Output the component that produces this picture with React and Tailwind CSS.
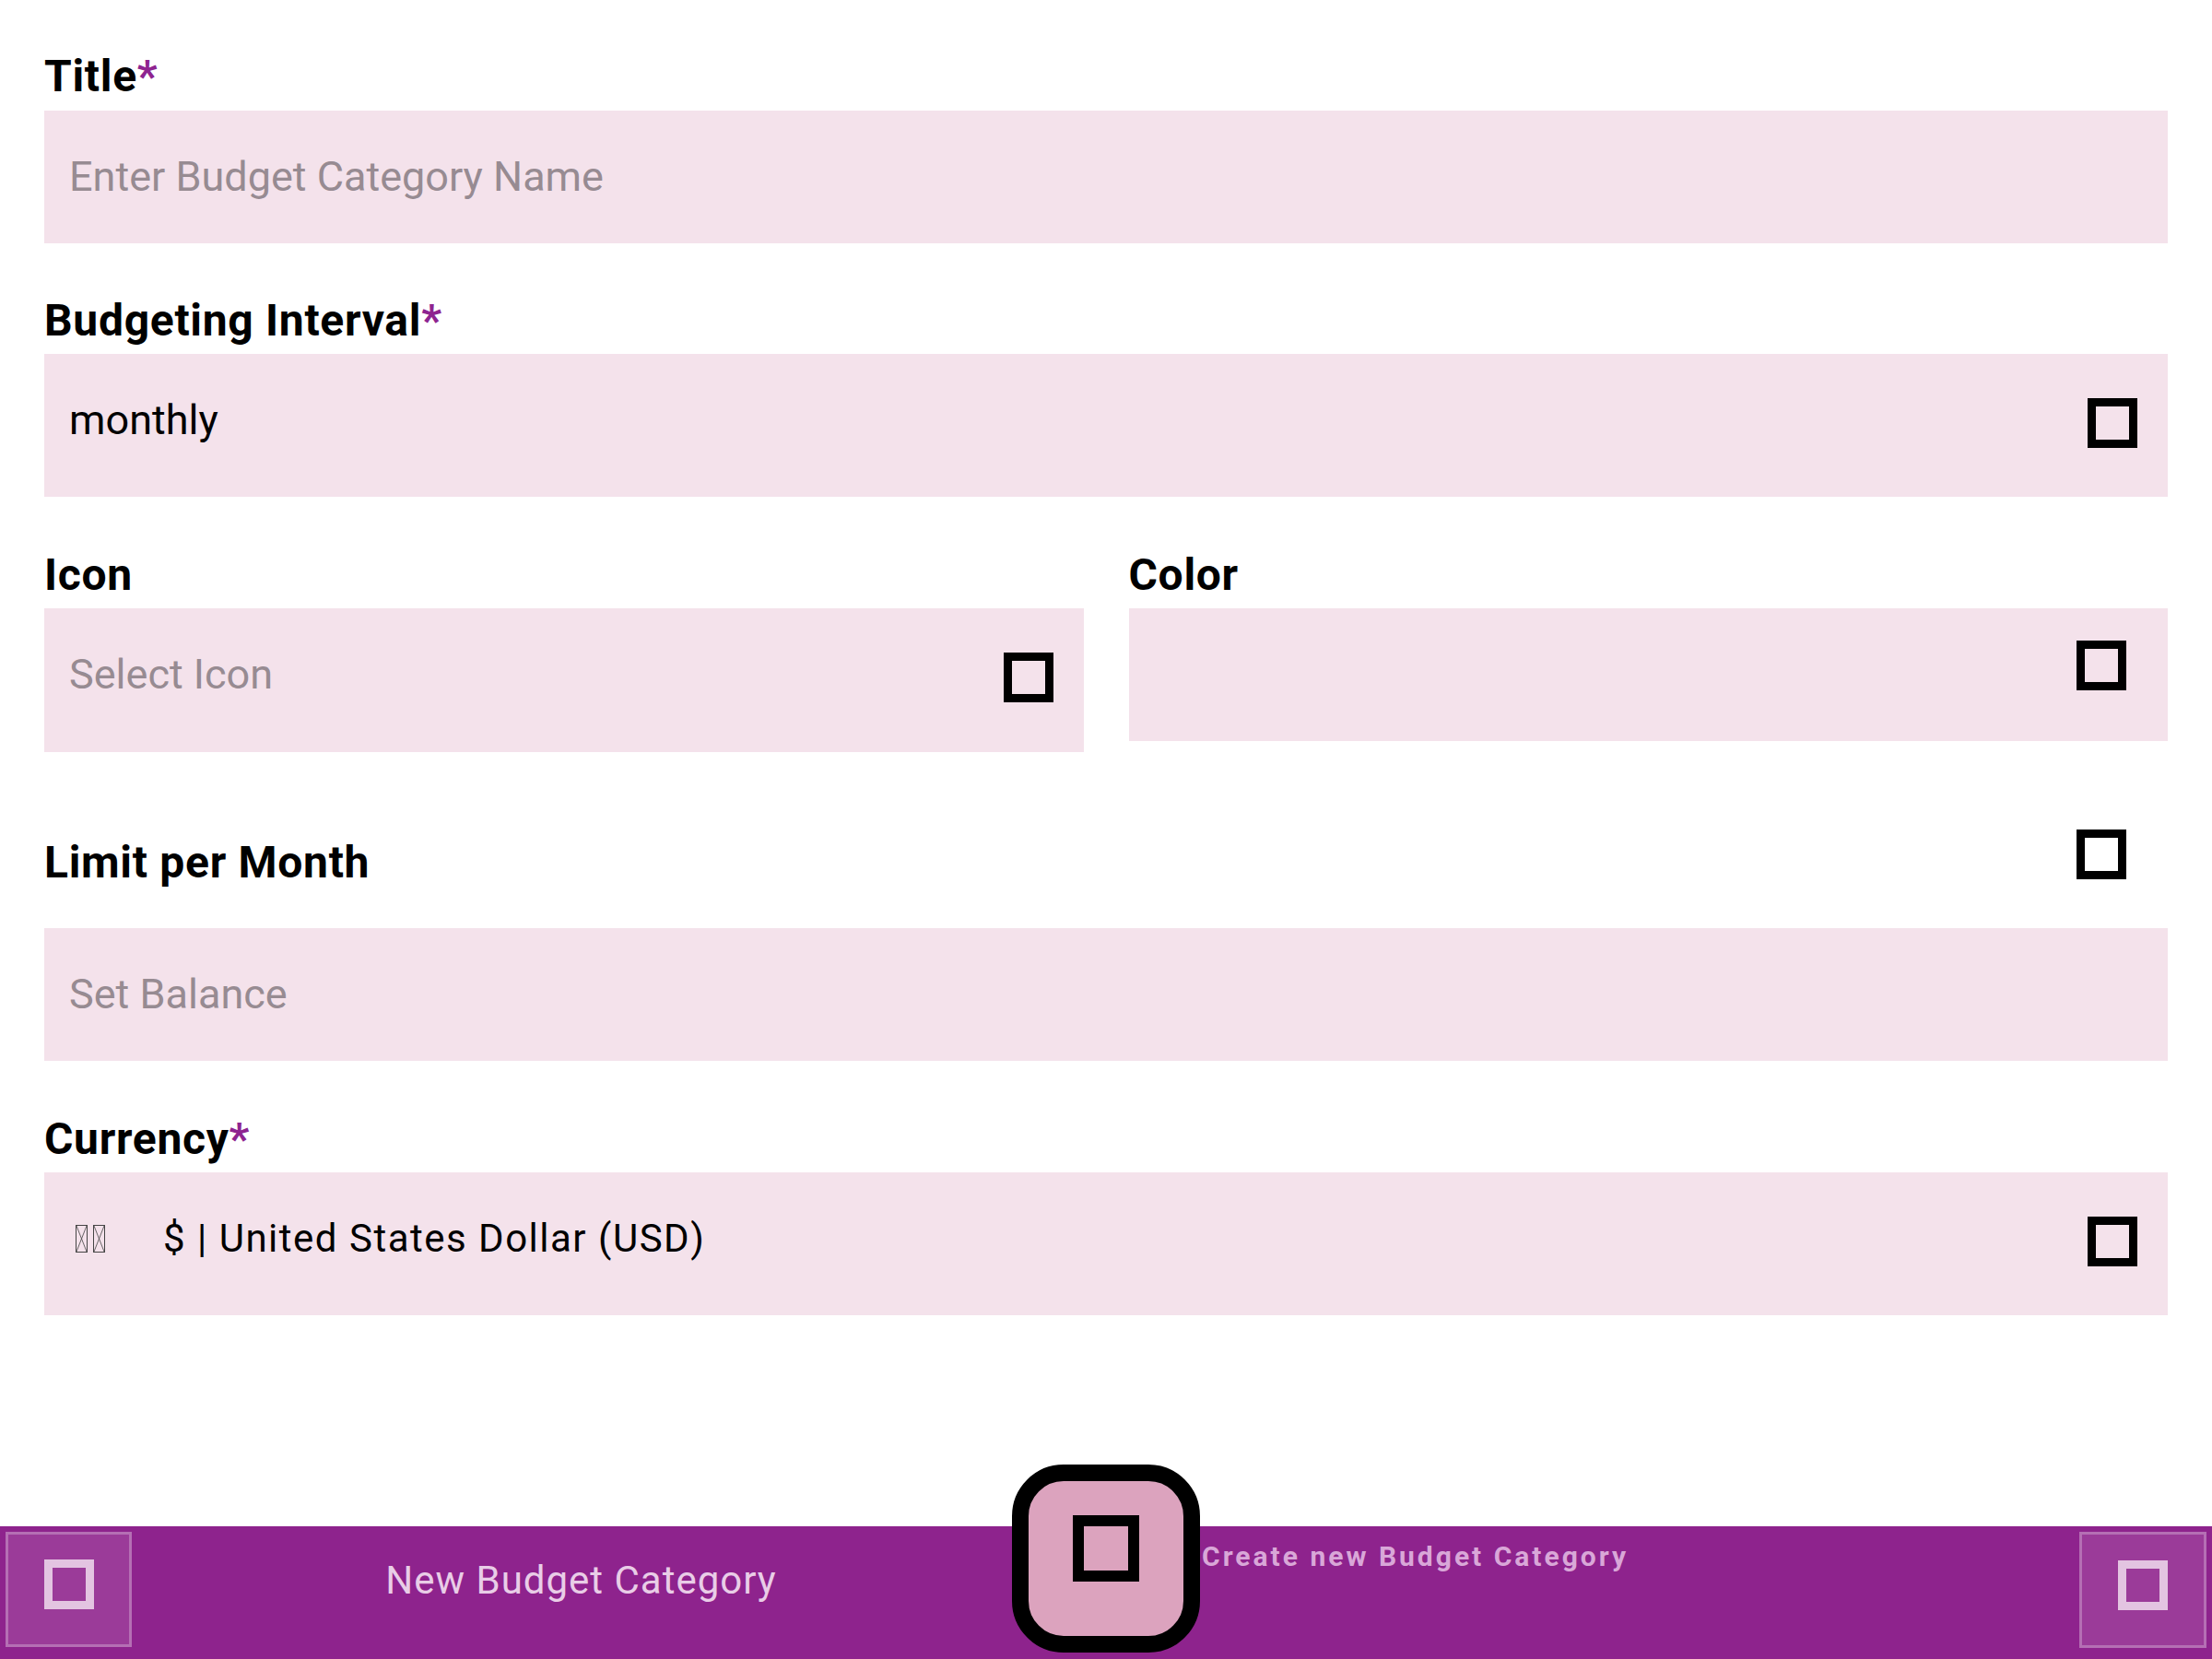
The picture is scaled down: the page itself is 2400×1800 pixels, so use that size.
const Label = ({ text, required = false, className = "" }) => (
  <div className={`h-[56px] text-[48px] leading-[56px] font-bold tracking-[0.7px] text-black ${className}`}>
    {text}
    {required && <span className="text-[#8e2490]">*</span>}
  </div>
);

const Glyph = ({ className = "" }) => (
  <div className={`box-border h-[54px] w-[54px] shrink-0 border-[9px] border-black ${className}`} />
);

const Tofu = () => (
  <svg width="13" height="30" viewBox="0 0 13 30" className="shrink-0">
    <rect x="0.5" y="0.5" width="12" height="29" fill="none" stroke="#444" strokeWidth="1" />
    <line x1="1" y1="1" x2="12" y2="29" stroke="#444" strokeWidth="0.8" />
    <line x1="12" y1="1" x2="1" y2="29" stroke="#444" strokeWidth="0.8" />
  </svg>
);

export default function App() {
  return (
    <div className="flex h-[1800px] w-[2400px] flex-col overflow-hidden bg-white font-[Roboto,sans-serif]">
      <div className="flex-1 px-[48px] pt-[55px]">
        {/* Title */}
        <Label text="Title" required />
        <div className="mt-[9px] flex h-[144px] items-center bg-[#f4e2eb] pl-[27px] text-[45px] text-[#978b92]">
          Enter Budget Category Name
        </div>

        {/* Budgeting Interval */}
        <Label text="Budgeting Interval" required className="mt-[56px]" />
        <div className="mt-[8px] flex h-[155px] items-center justify-between bg-[#f4e2eb] pl-[27px] pr-[33px]">
          <span className="mb-[12px] text-[45px] text-black">monthly</span>
          <Glyph className="mb-[6px]" />
        </div>

        {/* Icon / Color */}
        <div className="mt-[57px] grid grid-cols-2 gap-x-[49px]">
          <div>
            <Label text="Icon" />
            <div className="mt-[8px] flex h-[156px] items-center justify-between bg-[#f4e2eb] pl-[27px] pr-[33px]">
              <span className="mb-[12px] text-[45px] text-[#978b92]">Select Icon</span>
              <Glyph className="mb-[6px]" />
            </div>
          </div>
          <div>
            <Label text="Color" />
            <div className="mt-[8px] flex h-[144px] items-center justify-end bg-[#f4e2eb] pr-[45px]">
              <Glyph className="mb-[20px]" />
            </div>
          </div>
        </div>

        {/* Limit per Month */}
        <div className="mt-[84px] flex h-[64px] items-start justify-between">
          <Label text="Limit per Month" className="mt-[8px]" />
          <Glyph className="mr-[45px]" />
        </div>
        <div className="mt-[43px] flex h-[144px] items-center bg-[#f4e2eb] pl-[27px] text-[45px] text-[#978b92]">
          Set Balance
        </div>

        {/* Currency */}
        <Label text="Currency" required className="mt-[57px]" />
        <div className="mt-[8px] flex h-[155px] items-center justify-between bg-[#f4e2eb] pl-[34px] pr-[33px]">
          <div className="mb-[12px] flex items-center">
            <div className="flex items-center gap-[6px]">
              <Tofu />
              <Tofu />
            </div>
            <span className="ml-[63px] text-[42px] tracking-[1.5px] text-black">$ | United States Dollar (USD)</span>
          </div>
          <Glyph className="mb-[6px]" />
        </div>
      </div>

      {/* Bottom bar */}
      <div className="flex h-[144px] shrink-0 items-start bg-[#8e238d]">
        <div className="flex flex-1 items-start">
          <div className="ml-[6px] mt-[6px] box-border flex h-[125px] w-[137px] items-center justify-center border-[3px] border-[#b56fb4] bg-[#9b3b99]">
            <div className="mb-[11px] box-border h-[54px] w-[54px] border-[9px] border-[#e3c4e1]" />
          </div>
          <div className="mt-[27px] flex-1 pl-[20px] text-center text-[42px] tracking-[1px] text-[#e9cde7]">
            New Budget Category
          </div>
        </div>

        <div className="mb-[7px] box-border flex h-[204px] w-[204px] shrink-0 items-center justify-center self-end rounded-[56px] border-[18px] border-black bg-[#dca3be]">
          <div className="mb-[22px] box-border h-[72px] w-[72px] border-[12px] border-black" />
        </div>

        <div className="flex flex-1 items-start">
          <div className="ml-[2px] mt-[10px] text-[30px] font-bold tracking-[3px] text-[#d9a7d8]">
            Create new Budget Category
          </div>
          <div className="ml-auto mr-[6px] mt-[6px] box-border flex h-[126px] w-[138px] items-center justify-center border-[3px] border-[#b56fb4] bg-[#9b3b99]">
            <div className="mb-[11px] box-border h-[54px] w-[54px] border-[9px] border-[#e3c4e1]" />
          </div>
        </div>
      </div>
    </div>
  );
}
